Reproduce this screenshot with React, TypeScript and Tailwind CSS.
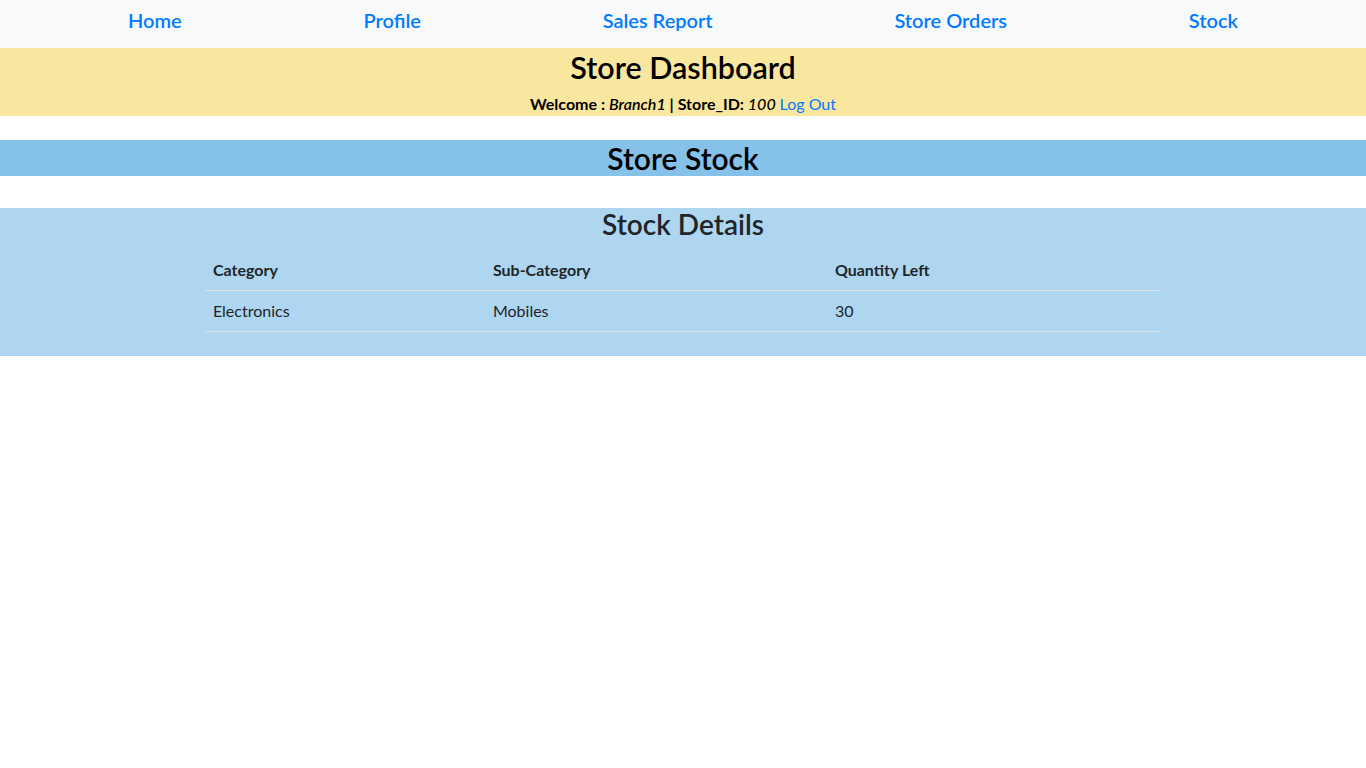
const links = ["Home", "Profile", "Sales Report", "Store Orders", "Stock"];

const stock = [{ category: "Electronics", sub: "Mobiles", qty: 30 }];

export default function App() {
  return (
    <div className="min-h-screen bg-white font-['Lato','Noto_Sans',sans-serif] text-[#212529]">
      {/* top nav */}
      <nav className="h-12 bg-[#f8f9fa] flex justify-between px-[128px] pt-[5px]">
        {links.map((l) => (
          <a key={l} href="#" className="text-[20px] leading-[30px] font-semibold text-[#007bff]">
            {l}
          </a>
        ))}
      </nav>

      <header className="bg-[#f9e79f] text-center text-black">
        <h2 className="text-[30.5px] leading-[38px] font-semibold mb-1.5">Store Dashboard</h2>
        <p className="text-[16px] leading-6 font-bold">
          Welcome : <i className="font-semibold">Branch1</i> | Store_ID: <i className="font-medium">100</i>{" "}
          <a href="#" className="font-normal text-[#007bff]">Log Out</a>
        </p>
      </header>

      <div className="mt-6 bg-[#85c1e9] text-center text-black">
        <h2 className="text-[30px] leading-9 font-semibold">Store Stock</h2>
      </div>

      <section className="mt-8 bg-[#aed6f1] pb-6">
        <h3 className="text-center text-[28px] leading-[1.2] font-semibold mb-2">Stock Details</h3>
        <table className="w-[70%] mx-auto text-left text-[16px] leading-6">
          <thead>
            <tr className="border-b border-[#dee2e6]">
              <th className="w-[280px] px-2 py-2 font-bold">Category</th>
              <th className="w-[342px] px-2 py-2 font-bold">Sub-Category</th>
              <th className="px-2 py-2 font-bold">Quantity Left</th>
            </tr>
          </thead>
          <tbody>
            {stock.map((s) => (
              <tr key={s.category} className="border-b border-[#dee2e6]">
                <td className="px-2 py-2">{s.category}</td>
                <td className="px-2 py-2">{s.sub}</td>
                <td className="px-2 py-2">{s.qty}</td>
              </tr>
            ))}
          </tbody>
        </table>
      </section>
    </div>
  );
}
